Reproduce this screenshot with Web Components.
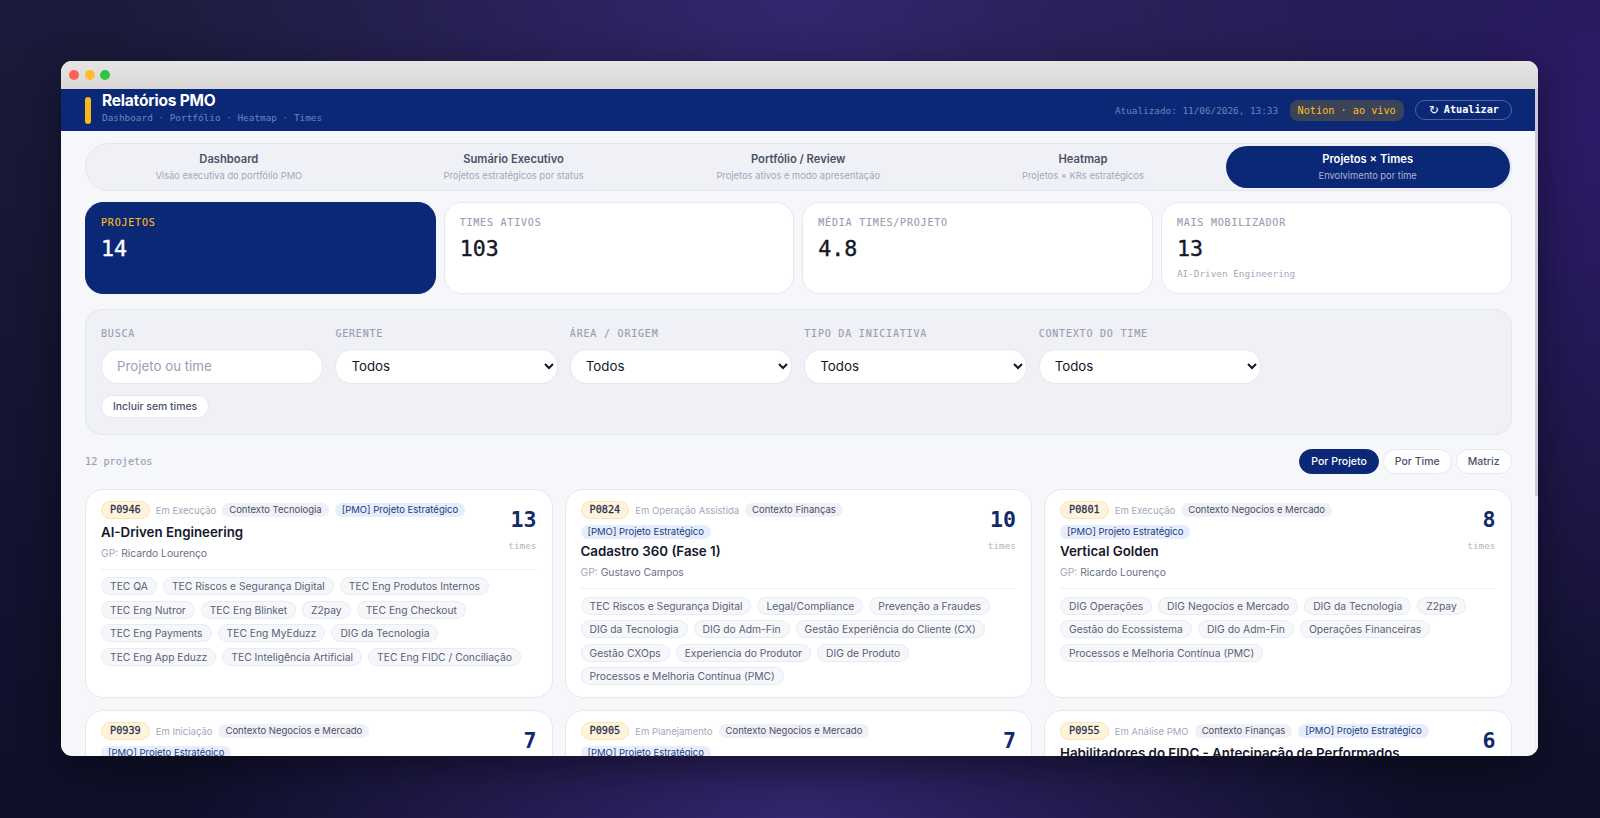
<!DOCTYPE html>
<html lang="pt-BR">
<head>
<meta charset="utf-8">
<title>Relatórios PMO</title>
<style>
    :root {
        --mono: "DejaVu Sans Mono", "Liberation Mono", monospace;
    }
    html, body {
        margin: 0;
        height: 100%;
        overflow: hidden;
    }
    body {
        background:
            radial-gradient(ellipse 700px 420px at 50% 0%, #33266e 0%, rgba(51,38,110,0) 100%),
            radial-gradient(ellipse 620px 300px at 50% 100%, #33266e 0%, rgba(51,38,110,0) 100%),
            radial-gradient(ellipse 560px 620px at 100% 15%, #2c1a68 0%, rgba(44,26,104,0) 100%),
            linear-gradient(#1a1b3a, #0f0f2a);
        font-family: Inter, "Noto Sans", sans-serif;
    }
</style>
</head>
<body>

<template id="tpl-window">
    <style>
        :host {
            display: flex;
            flex-direction: column;
            width: 1477px;
            height: 695px;
            margin: 61px 0 0 61px;
            border-radius: 11px;
            overflow: hidden;
            background: #f6f7fb;
            box-shadow: 0 12px 40px rgba(0,0,0,.45);
        }
        .titlebar {
            flex: none;
            height: 28px;
            padding-left: 8px;
            display: flex;
            align-items: center;
            gap: 5.5px;
            background: linear-gradient(#e6e5e3, #d8d7d5);
        }
        .dot { width: 10px; height: 10px; border-radius: 50%; }
        .r { background: #ff5f57; }
        .y { background: #febc2e; }
        .g { background: #28c840; }
        .body { flex: 1; min-height: 0; display: flex; }
        .page { flex: 1; min-width: 0; display: flex; flex-direction: column; }
        .bar { flex: none; width: 3px; background: #eef0f5; }
        .thumb { height: 407px; background: #c9ccd6; }
    </style>
    <div class="titlebar"><span class="dot r"></span><span class="dot y"></span><span class="dot g"></span></div>
    <div class="body">
        <div class="page"><slot></slot></div>
        <div class="bar"><div class="thumb"></div></div>
    </div>
</template>

<template id="tpl-header">
    <style>
        :host {
            flex: none;
            display: flex;
            align-items: center;
            height: 42px;
            padding: 0 23.5px 0 24px;
            background: #0b2876;
            font-family: var(--mono);
        }
        .mark { width: 6px; height: 27px; border-radius: 3px; background: #fbb81c; margin-right: 11px; }
        .brand { flex: 1; margin-top: -3px; }
        h1 { margin: 0; font: 700 15.5px/18px Inter, sans-serif; color: #fff; letter-spacing: -.2px; }
        .sub { font-size: 9.4px; line-height: 14px; margin-top: 1px; color: #6b84b9; }
        .time { font-size: 9.35px; color: #6b84b9; margin-right: 11.5px; }
        .live { font-size: 10.2px; line-height: 21px; padding: 0 8px; border-radius: 8px; background: #3b4359; color: #fbbf24; margin-right: 11.5px; }
        button {
            display: flex;
            align-items: center;
            gap: 5px;
            font: 700 10.2px/18px var(--mono);
            color: #fff;
            background: transparent;
            border: 1px solid rgba(255,255,255,.28);
            border-radius: 10px;
            padding: 0 11.5px 0 12.5px;
        }
        .spin { font: 400 12px/18px "DejaVu Sans", sans-serif; }
    </style>
    <div class="mark"></div>
    <div class="brand">
        <h1>Relatórios PMO</h1>
        <div class="sub">Dashboard · Portfólio · Heatmap · Times</div>
    </div>
    <span class="time">Atualizado: 11/06/2026, 13:33</span>
    <span class="live">Notion · ao vivo</span>
    <button><span class="spin">↻</span>Atualizar</button>
</template>

<template id="tpl-main">
    <style>
        :host {
            display: block;
            flex: 1;
            min-height: 0;
            overflow: hidden;
            padding: 12px 23.5px 0 24px;
        }
        .kpis { display: grid; grid-template-columns: repeat(4, 1fr); gap: 8px; }
    </style>
    <slot name="tabs"></slot>
    <div class="kpis"><slot name="kpi"></slot></div>
    <slot></slot>
</template>

<template id="tpl-tabs">
    <style>
        :host {
            display: grid;
            grid-template-columns: repeat(5, 1fr);
            gap: 1px;
            height: 42px;
            padding: 2px 1px;
            margin-bottom: 11px;
            border: 1px solid #e3e6ee;
            border-radius: 24px;
            background: #f0f1f6;
        }
    </style>
    <slot></slot>
</template>

<template id="tpl-tab">
    <style>
        :host {
            display: flex;
            flex-direction: column;
            align-items: center;
            justify-content: center;
            border-radius: 21px;
            color: #4b5068;
        }
        :host([active]) { background: #0b2876; color: #fff; }
        .label { font-size: 11.2px; line-height: 15px; font-weight: 600; }
        .hint { font-size: 9.35px; line-height: 14px; margin-top: 2px; color: #a3a7ba; }
        :host([active]) .hint { color: #a9b6d6; }
    </style>
    <div class="label"></div>
    <div class="hint"></div>
</template>

<template id="tpl-kpi">
    <style>
        :host {
            display: block;
            height: 92px;
            box-sizing: border-box;
            padding: 13px 15px 0;
            border: 1px solid #e6e8f0;
            border-radius: 18px;
            background: #fff;
            font-family: var(--mono);
        }
        :host([dark]) { background: #0b2876; border-color: #0b2876; }
        .label { font-size: 10px; line-height: 13px; letter-spacing: .8px; color: #9a9eb3; -webkit-text-stroke: .15px currentColor; }
        :host([dark]) .label { color: #fbb81c; }
        .value { font-size: 21.6px; line-height: 28px; font-weight: 400; -webkit-text-stroke: .4px currentColor; color: #14172b; margin-top: 6px; }
        :host([dark]) .value { color: #fff; }
        .note { font-size: 9.35px; line-height: 12px; color: #a4a8ba; margin-top: 5px; }
    </style>
    <div class="label"></div>
    <div class="value"></div>
    <div class="note"></div>
</template>

<template id="tpl-filters">
    <style>
        :host {
            display: block;
            box-sizing: border-box;
            height: 126px;
            padding: 17px 15px 0;
            margin: 15px 0 14px;
            border: 1px solid #e3e6ee;
            border-radius: 18px;
            background: #f0f1f6;
        }
        .grid { display: grid; grid-template-columns: repeat(6, 1fr); gap: 12px; }
        .toggle {
            display: inline-block;
            margin-top: 11.5px;
            font-size: 10.4px;
            line-height: 21px;
            font-weight: 500;
            padding: 0 11px;
            border: 1px solid #e6e8f0;
            border-radius: 11px;
            background: #fff;
            color: #4b5068;
        }
    </style>
    <div class="grid"><slot></slot></div>
    <span class="toggle">Incluir sem times</span>
</template>

<template id="tpl-field">
    <style>
        :host { display: block; }
        label {
            display: block;
            font: 10px/13px var(--mono);
            letter-spacing: .8px;
            color: #9a9eb3;
            -webkit-text-stroke: .15px currentColor;
            margin-bottom: 9px;
        }
        input, select {
            display: block;
            box-sizing: border-box;
            width: 100%;
            height: 34.5px;
            padding: 0 15px;
            border: 1px solid #e6e8f0;
            border-radius: 17px;
            background-color: #fff;
            font: 400 13.3px Inter, sans-serif;
            color: #14172b;
            outline: none;
        }
        input::placeholder { color: #9a9eb3; }
        select { padding: 0 11px; }
    </style>
    <label></label>
</template>

<template id="tpl-toolbar">
    <style>
        :host {
            display: flex;
            align-items: center;
            justify-content: space-between;
            height: 25px;
            margin-bottom: 15px;
        }
        .count { font: 10.2px var(--mono); color: #9a9eb3; -webkit-text-stroke: .15px currentColor; }
        .views { display: flex; gap: 4px; }
        span {
            font-size: 10.5px;
            line-height: 23px;
            font-weight: 500;
            padding: 0 11px;
            border: 1px solid #e6e8f0;
            border-radius: 12.5px;
            background: #fff;
            color: #4b5068;
        }
        span.on { background: #0b2876; border-color: #0b2876; color: #fff; }
    </style>
    <div class="count">12 projetos</div>
    <div class="views">
        <span class="on">Por Projeto</span>
        <span>Por Time</span>
        <span>Matriz</span>
    </div>
</template>

<template id="tpl-grid">
    <style>
        :host {
            display: grid;
            grid-template-columns: repeat(3, 1fr);
            gap: 12px;
        }
    </style>
    <slot></slot>
</template>

<template id="tpl-card">
    <style>
        :host {
            display: block;
            box-sizing: border-box;
            min-height: 208px;
            padding: 11px 15px 12px;
            border: 1px solid #e6e8f0;
            border-radius: 18px;
            background: #fff;
        }
        .top { display: flex; gap: 12px; padding-bottom: 8px; border-bottom: 1px solid #eef0f5; margin-bottom: 7.5px; }
        .info { flex: 1; min-width: 0; }
        .meta { display: flex; flex-wrap: wrap; align-items: center; gap: 5.5px 6px; }
        .code {
            font: 400 10.2px/16px var(--mono);
            -webkit-text-stroke: .3px currentColor;
            padding: 0 8px;
            border: 1px solid #fde3ae;
            border-radius: 9px;
            background: #fff3dc;
            color: #2b3352;
        }
        .status { font-size: 9.5px; color: #a3a7ba; }
        .tag { font-size: 9.5px; line-height: 14px; padding: 0 7px; border-radius: 7px; background: #f0f1f6; color: #4b5068; }
        .tag.pmo { background: #e6eefc; color: #21397f; }
        h2 { margin: 3.5px 0 0; font-size: 13.3px; line-height: 18px; font-weight: 560; color: #14172b; }
        .gp { font-size: 10.3px; line-height: 16px; margin-top: 4px; color: #6b7085; }
        .gp b { font-weight: 400; color: #a3a7ba; }
        .total { flex: none; text-align: right; font-family: var(--mono); }
        .num { font-size: 21.6px; line-height: 30px; font-weight: 700; color: #12296b; margin-top: 4px; }
        .times { font-size: 9.35px; line-height: 13px; margin-top: 4px; color: #b0b3c2; }
        .chips { display: flex; flex-wrap: wrap; gap: 5.5px 6px; }
    </style>
    <div class="top">
        <div class="info">
            <div class="meta">
                <span class="code"></span>
                <span class="status"></span>
                <span class="tag ctx"></span>
                <span class="tag pmo"></span>
            </div>
            <h2></h2>
            <div class="gp"><b>GP:</b> <span class="name"></span></div>
        </div>
        <div class="total">
            <div class="num"></div>
            <div class="times">times</div>
        </div>
    </div>
    <div class="chips"><slot></slot></div>
</template>

<template id="tpl-chip">
    <style>
        :host {
            display: block;
            font-size: 10.3px;
            line-height: 16px;
            padding: 0 8px;
            border: 1px solid #e9ebf2;
            border-radius: 9px;
            background: #f6f7fb;
            color: #5a5f75;
            white-space: nowrap;
        }
    </style>
    <slot></slot>
</template>

<script>
    function stamp(el, id) {
        el.shadow = el.attachShadow({mode: 'open'});
        el.shadow.appendChild(document.getElementById(id).content.cloneNode(true));
        return el.shadow;
    }

    class AppWindow extends HTMLElement {
        constructor() { super(); stamp(this, 'tpl-window'); }
    }
    class PmoHeader extends HTMLElement {
        constructor() { super(); stamp(this, 'tpl-header'); }
    }
    class PmoMain extends HTMLElement {
        constructor() { super(); stamp(this, 'tpl-main'); }
    }
    class PmoTabs extends HTMLElement {
        constructor() { super(); stamp(this, 'tpl-tabs'); }
    }
    class PmoTab extends HTMLElement {
        constructor() { super(); stamp(this, 'tpl-tab'); }
        connectedCallback() {
            this.shadow.querySelector('.label').textContent = this.getAttribute('label');
            this.shadow.querySelector('.hint').textContent = this.getAttribute('hint');
        }
    }
    class KpiCard extends HTMLElement {
        constructor() { super(); stamp(this, 'tpl-kpi'); }
        connectedCallback() {
            this.shadow.querySelector('.label').textContent = this.getAttribute('label');
            this.shadow.querySelector('.value').textContent = this.getAttribute('value');
            this.shadow.querySelector('.note').textContent = this.getAttribute('note') || '';
        }
    }
    class FilterPanel extends HTMLElement {
        constructor() { super(); stamp(this, 'tpl-filters'); }
    }
    class FilterField extends HTMLElement {
        constructor() { super(); stamp(this, 'tpl-field'); }
        connectedCallback() {
            this.shadow.querySelector('label').textContent = this.getAttribute('label');
            let ctrl;
            if (this.hasAttribute('placeholder')) {
                ctrl = document.createElement('input');
                ctrl.placeholder = this.getAttribute('placeholder');
            } else {
                ctrl = document.createElement('select');
                ctrl.innerHTML = '<option>Todos</option>';
            }
            this.shadow.appendChild(ctrl);
        }
    }
    class ViewToolbar extends HTMLElement {
        constructor() { super(); stamp(this, 'tpl-toolbar'); }
    }
    class CardGrid extends HTMLElement {
        constructor() { super(); stamp(this, 'tpl-grid'); }
    }
    class ProjectCard extends HTMLElement {
        constructor() { super(); stamp(this, 'tpl-card'); }
        connectedCallback() {
            const s = this.shadow;
            s.querySelector('.code').textContent = this.getAttribute('code');
            s.querySelector('.status').textContent = this.getAttribute('status');
            s.querySelector('.ctx').textContent = this.getAttribute('context');
            s.querySelector('.pmo').textContent = '[PMO] Projeto Estratégico';
            s.querySelector('h2').textContent = this.getAttribute('name');
            s.querySelector('.name').textContent = this.getAttribute('gp');
            s.querySelector('.num').textContent = this.getAttribute('total');
        }
    }
    class TeamChip extends HTMLElement {
        constructor() { super(); stamp(this, 'tpl-chip'); }
    }

    customElements.define('app-window', AppWindow);
    customElements.define('pmo-header', PmoHeader);
    customElements.define('pmo-main', PmoMain);
    customElements.define('pmo-tabs', PmoTabs);
    customElements.define('pmo-tab', PmoTab);
    customElements.define('kpi-card', KpiCard);
    customElements.define('filter-panel', FilterPanel);
    customElements.define('filter-field', FilterField);
    customElements.define('view-toolbar', ViewToolbar);
    customElements.define('card-grid', CardGrid);
    customElements.define('project-card', ProjectCard);
    customElements.define('team-chip', TeamChip);
</script>

<app-window>
    <pmo-header></pmo-header>
    <pmo-main>
        <pmo-tabs slot="tabs">
            <pmo-tab label="Dashboard" hint="Visão executiva do portfólio PMO"></pmo-tab>
            <pmo-tab label="Sumário Executivo" hint="Projetos estratégicos por status"></pmo-tab>
            <pmo-tab label="Portfólio / Review" hint="Projetos ativos e modo apresentação"></pmo-tab>
            <pmo-tab label="Heatmap" hint="Projetos × KRs estratégicos"></pmo-tab>
            <pmo-tab active label="Projetos × Times" hint="Envolvimento por time"></pmo-tab>
        </pmo-tabs>
        <kpi-card slot="kpi" dark label="PROJETOS" value="14"></kpi-card>
        <kpi-card slot="kpi" label="TIMES ATIVOS" value="103"></kpi-card>
        <kpi-card slot="kpi" label="MÉDIA TIMES/PROJETO" value="4.8"></kpi-card>
        <kpi-card slot="kpi" label="MAIS MOBILIZADOR" value="13" note="AI-Driven Engineering"></kpi-card>
        <filter-panel>
            <filter-field label="BUSCA" placeholder="Projeto ou time"></filter-field>
            <filter-field label="GERENTE"></filter-field>
            <filter-field label="ÁREA / ORIGEM"></filter-field>
            <filter-field label="TIPO DA INICIATIVA"></filter-field>
            <filter-field label="CONTEXTO DO TIME"></filter-field>
        </filter-panel>
        <view-toolbar></view-toolbar>
        <card-grid>
            <project-card code="P0946" status="Em Execução" context="Contexto Tecnologia" name="AI-Driven Engineering" gp="Ricardo Lourenço" total="13">
                <team-chip>TEC QA</team-chip>
                <team-chip>TEC Riscos e Segurança Digital</team-chip>
                <team-chip>TEC Eng Produtos Internos</team-chip>
                <team-chip>TEC Eng Nutror</team-chip>
                <team-chip>TEC Eng Blinket</team-chip>
                <team-chip>Z2pay</team-chip>
                <team-chip>TEC Eng Checkout</team-chip>
                <team-chip>TEC Eng Payments</team-chip>
                <team-chip>TEC Eng MyEduzz</team-chip>
                <team-chip>DIG da Tecnologia</team-chip>
                <team-chip>TEC Eng App Eduzz</team-chip>
                <team-chip>TEC Inteligência Artificial</team-chip>
                <team-chip>TEC Eng FIDC / Conciliação</team-chip>
            </project-card>
            <project-card code="P0824" status="Em Operação Assistida" context="Contexto Finanças" name="Cadastro 360 (Fase 1)" gp="Gustavo Campos" total="10">
                <team-chip>TEC Riscos e Segurança Digital</team-chip>
                <team-chip>Legal/Compliance</team-chip>
                <team-chip>Prevenção a Fraudes</team-chip>
                <team-chip>DIG da Tecnologia</team-chip>
                <team-chip>DIG do Adm-Fin</team-chip>
                <team-chip>Gestão Experiência do Cliente (CX)</team-chip>
                <team-chip>Gestão CXOps</team-chip>
                <team-chip>Experiencia do Produtor</team-chip>
                <team-chip>DIG de Produto</team-chip>
                <team-chip>Processos e Melhoria Contínua (PMC)</team-chip>
            </project-card>
            <project-card code="P0801" status="Em Execução" context="Contexto Negocios e Mercado" name="Vertical Golden" gp="Ricardo Lourenço" total="8">
                <team-chip>DIG Operações</team-chip>
                <team-chip>DIG Negocios e Mercado</team-chip>
                <team-chip>DIG da Tecnologia</team-chip>
                <team-chip>Z2pay</team-chip>
                <team-chip>Gestão do Ecossistema</team-chip>
                <team-chip>DIG do Adm-Fin</team-chip>
                <team-chip>Operações Financeiras</team-chip>
                <team-chip>Processos e Melhoria Contínua (PMC)</team-chip>
            </project-card>
            <project-card code="P0939" status="Em Iniciação" context="Contexto Negocios e Mercado" total="7"></project-card>
            <project-card code="P0905" status="Em Planejamento" context="Contexto Negocios e Mercado" total="7"></project-card>
            <project-card code="P0955" status="Em Análise PMO" context="Contexto Finanças" name="Habilitadores do FIDC - Antecipação de Performados" total="6"></project-card>
        </card-grid>
    </pmo-main>
</app-window>
</body>
</html>
